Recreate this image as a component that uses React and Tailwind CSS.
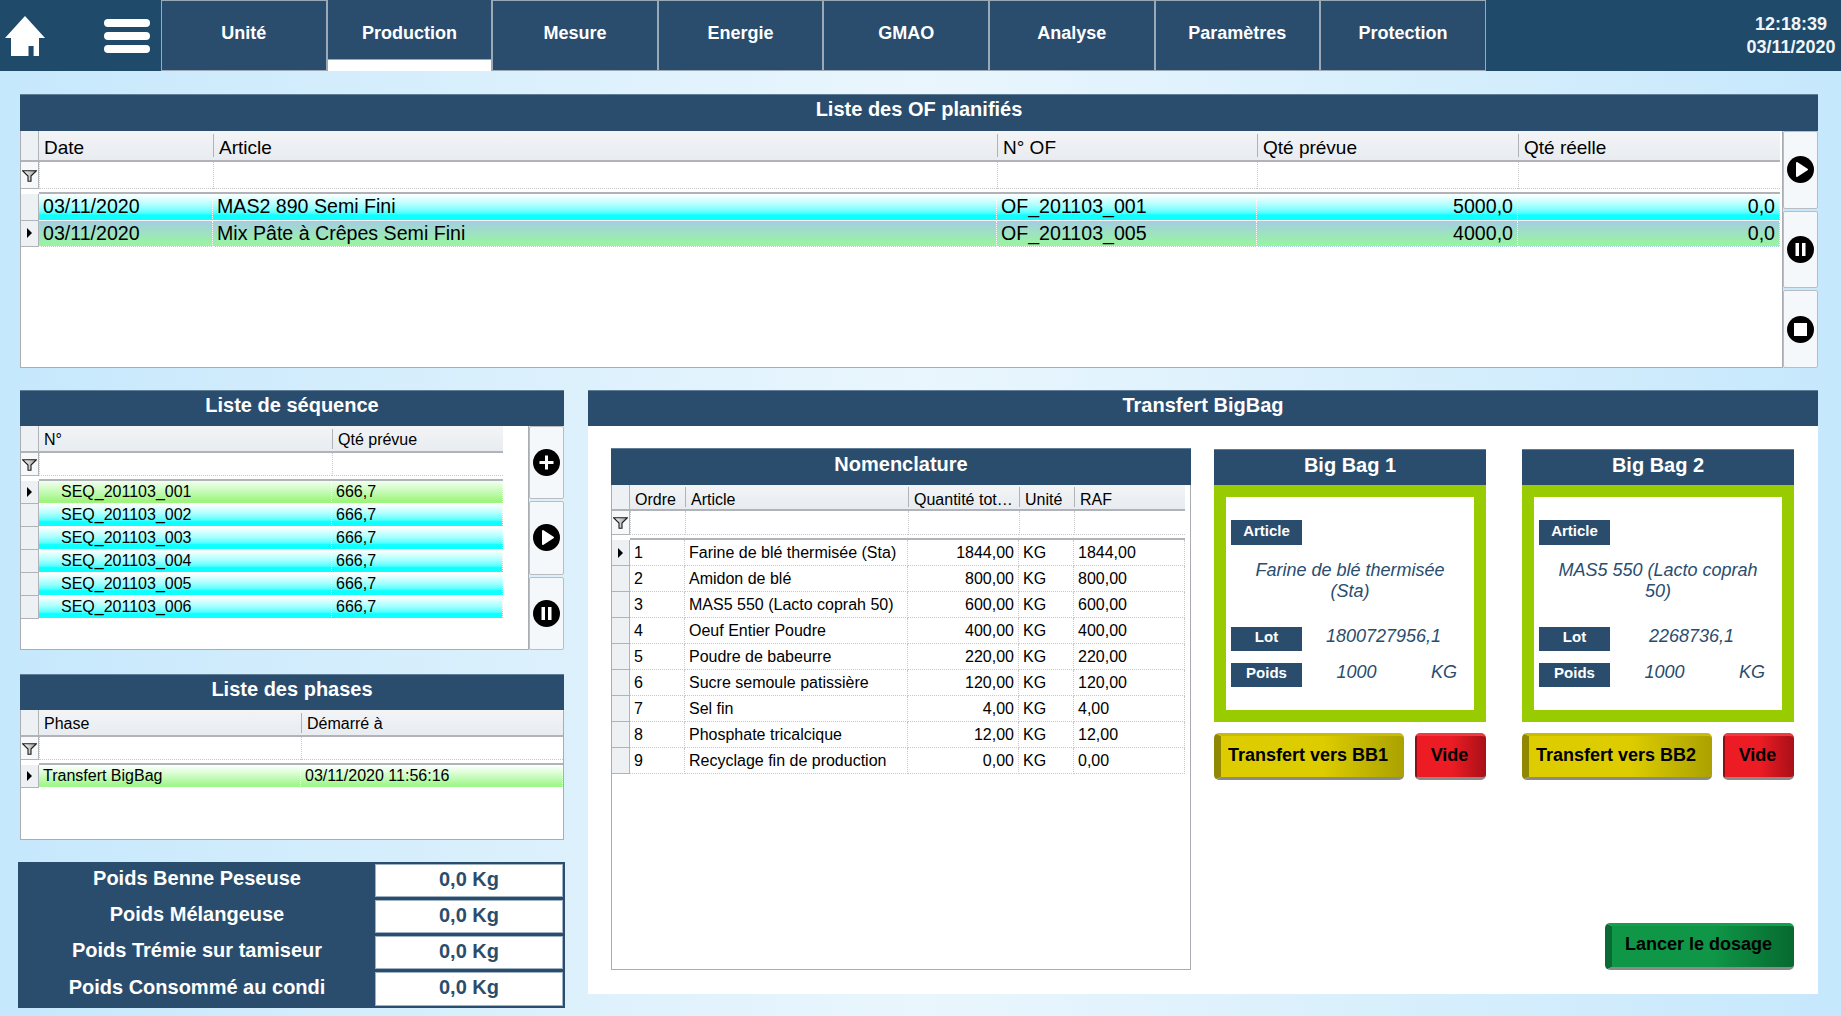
import React from "react";

const navy = "bg-[#2a4d6e]";

const tabs = ["Unité", "Production", "Mesure", "Energie", "GMAO", "Analyse", "Paramètres", "Protection"];

const CYAN = "bg-linear-to-b from-[#ffffff] to-[#0dffff] to-80%";

// tableaux
const ofColumns = [
  { label: "Date", w: "w-[174px]" },
  { label: "Article", w: "w-[784px]" },
  { label: "N° OF", w: "w-[260px]" },
  { label: "Qté prévue", w: "w-[261px]", right: true },
  { label: "Qté réelle", w: "w-[262px]", right: true },
];
const ofRows = [
  { bg: CYAN, cells: ["03/11/2020", "MAS2 890 Semi Fini", "OF_201103_001", "5000,0", "0,0"] },
  {
    bg: "bg-linear-to-b from-[#a4cde2] to-[#97f699]",
    selected: true,
    cells: ["03/11/2020", "Mix Pâte à Crêpes Semi Fini", "OF_201103_005", "4000,0", "0,0"],
  },
];

const seqColumns = [
  { label: "N°", w: "w-[293px]", pad: "pl-[22px]" },
  { label: "Qté prévue", w: "w-[171px]" },
];
const seqRows = [
  { bg: "bg-linear-to-b from-[#f2fff0] to-[#9ef57e] to-90%", selected: true, cells: ["SEQ_201103_001", "666,7"] },
  { bg: CYAN, cells: ["SEQ_201103_002", "666,7"] },
  { bg: CYAN, cells: ["SEQ_201103_003", "666,7"] },
  { bg: CYAN, cells: ["SEQ_201103_004", "666,7"] },
  { bg: CYAN, cells: ["SEQ_201103_005", "666,7"] },
  { bg: CYAN, cells: ["SEQ_201103_006", "666,7"] },
];

const phaseColumns = [
  { label: "Phase", w: "w-[262px]" },
  { label: "Démarré à", w: "w-[262px]" },
];
const phaseRows = [
  {
    bg: "bg-linear-to-b from-[#ffffff] to-[#a0f78c] to-90%",
    selected: true,
    cells: ["Transfert BigBag", "03/11/2020 11:56:16"],
  },
];

const nomColumns = [
  { label: "Ordre", w: "w-[55px]" },
  { label: "Article", w: "w-[223px]" },
  { label: "Quantité tot…", w: "w-[111px]", right: true },
  { label: "Unité", w: "w-[55px]" },
  { label: "RAF", w: "w-[111px]" },
];
const nomRows = [
  ["1", "Farine de blé thermisée (Sta)", "1844,00", "KG", "1844,00"],
  ["2", "Amidon de blé", "800,00", "KG", "800,00"],
  ["3", "MAS5 550 (Lacto coprah 50)", "600,00", "KG", "600,00"],
  ["4", "Oeuf Entier Poudre", "400,00", "KG", "400,00"],
  ["5", "Poudre de babeurre", "220,00", "KG", "220,00"],
  ["6", "Sucre semoule patissière", "120,00", "KG", "120,00"],
  ["7", "Sel fin", "4,00", "KG", "4,00"],
  ["8", "Phosphate tricalcique", "12,00", "KG", "12,00"],
  ["9", "Recyclage fin de production", "0,00", "KG", "0,00"],
].map((cells, i) => ({ bg: "bg-white", selected: i === 0, dotted: true, cells }));

const weights = [
  ["Poids Benne Peseuse", "h-[33px]"],
  ["Poids Mélangeuse", "h-[33px]"],
  ["Poids Trémie sur tamiseur", "h-[33px]"],
  ["Poids Consommé au condi", "h-[34px]"],
];

function HomeIcon() {
  return (
    <svg width="40" height="40" viewBox="0 0 40 40" className="ml-[5px] shrink-0">
      <path d="M20 0 L40 22 H34 V40 H28.6 V30 H23.5 V40 H6 V22 H0 Z" fill="#fff" />
    </svg>
  );
}

function FilterIcon() {
  return (
    <svg width="15" height="12" viewBox="0 0 15 12">
      <defs>
        <linearGradient id="funnel" x1="0" x2="1" y1="0" y2="0">
          <stop offset="0" stopColor="#ffffff" />
          <stop offset="1" stopColor="#9a9a9a" />
        </linearGradient>
      </defs>
      <path d="M0.6 0.7 H14.4 L9 6 V11.3 H6 V6 Z" fill="url(#funnel)" stroke="#1c1c1c" strokeWidth="1.1" />
    </svg>
  );
}

function RoundIcon({ type }) {
  return (
    <svg width="27" height="27" viewBox="0 0 27 27">
      <circle cx="13.5" cy="13.5" r="13.5" fill="#000" />
      {type === "play" && <path d="M10 7 L20 13.5 L10 20 Z" fill="#fff" stroke="#fff" strokeWidth="2" strokeLinejoin="round" />}
      {type === "pause" && <path d="M8.5 7 H12 V20 H8.5 Z M15 7 H18.5 V20 H15 Z" fill="#fff" />}
      {type === "stop" && <rect x="7" y="7" width="13" height="13" fill="#fff" />}
      {type === "plus" && <path d="M12 6.5 H15 V12 H20.5 V15 H15 V20.5 H12 V15 H6.5 V12 H12 Z" fill="#fff" />}
    </svg>
  );
}

function SideButtons({ icons }) {
  return (
    <div className="flex flex-col gap-[2px] shrink-0 w-[35px]">
      {icons.map((type) => (
        <div
          key={type}
          className="flex-1 flex items-center justify-center bg-[#f5f8fb] border border-[#b9bdc1] rounded-[2px]"
        >
          <RoundIcon type={type} />
        </div>
      ))}
    </div>
  );
}

function Title({ text, className = "h-[36px] pb-[7px]" }) {
  return (
    <div
      className={`${className} ${navy} border-t border-[#5f7d96] shrink-0 flex items-center justify-center text-white font-bold text-[20px]`}
    >
      {text}
    </div>
  );
}

function DataGrid({ columns, rows, text, cellText, headH, headPad, filterH, rowH, className = "" }) {
  return (
    <div className={`bg-white border-x border-b border-[#a9adb1] overflow-hidden ${className}`}>
      <div className={`flex ${headH}`}>
        <div className="w-[18px] shrink-0 bg-[#eef1f4] border-r border-b-2 border-[#b0b4b8]" />
        {columns.map((c, i) => (
          <div
            key={c.label}
            className={`${c.w} shrink-0 flex items-center bg-linear-to-b from-[#f3f4f6] to-[#e8ecf0] border-b-2 border-[#b0b4b8] ${text}`}
          >
            <div className={`h-[80%] w-full flex items-center pl-[5px] whitespace-nowrap ${headPad} ${i > 0 ? "border-l border-[#b0b4b8]" : ""}`}>
              {c.label}
            </div>
          </div>
        ))}
      </div>
      <div className={`flex ${filterH}`}>
        <div className="w-[18px] shrink-0 flex items-center pl-[1px] pt-[1px] bg-[#f7f8f9] border-r border-b border-[#b0b4b8]">
          <FilterIcon />
        </div>
        {columns.map((c) => (
          <div key={c.label} className={`${c.w} shrink-0 border-l border-b border-dotted border-[#c8c8c8]`} />
        ))}
      </div>
      <div className="flex h-[5px]">
        <div className="w-[18px] shrink-0" />
        {columns.map((c) => (
          <div key={c.label} className={`${c.w} shrink-0 border-b-2 border-[#b0b4b8]`} />
        ))}
      </div>
      {rows.map((row, r) => (
        <div key={r} className={`flex ${rowH}`}>
          <div className="w-[18px] shrink-0 flex items-center justify-center bg-[#eef1f4] border-r border-b border-[#b0b4b8]">
            {row.selected && <div className="w-0 h-0 border-y-[5px] border-y-transparent border-l-[5px] border-l-black" />}
          </div>
          {columns.map((c, i) => (
            <div
              key={c.label}
              className={`${c.w} shrink-0 flex items-center whitespace-nowrap ${row.bg} ${cellText || text} ${
                row.dotted ? "border-b border-r border-dotted border-[#c8c8c8]" : "border-b border-r border-dotted border-white"
              } ${c.right ? "justify-end pr-[4px]" : c.pad || "pl-[4px]"}`}
            >
              {row.cells[i]}
            </div>
          ))}
        </div>
      ))}
    </div>
  );
}

function Bevel({ label, className, edge, width }) {
  return (
    <div
      className={`${width} h-[47px] shrink-0 flex items-center rounded-[5px] border-b-[3px] border-b-[#8a8a8a] ${edge} ${className} text-black font-bold text-[18px] whitespace-nowrap`}
    >
      {label}
    </div>
  );
}

function BigBag({ title, article, lot, btn }) {
  return (
    <div className="w-[272px] shrink-0 flex flex-col">
      <Title text={title} className="h-[36px] pb-[5px]" />
      <div className="h-[237px] border-[12px] border-[#99cc00] bg-white flex flex-col pl-[5px] text-[18px] italic text-[#2a4d6e]">
        <div className="mt-[23px] w-[71px] h-[25px] pb-[2px] shrink-0 flex items-center justify-center bg-[#2a4d6e] text-white font-bold not-italic text-[15px]">
          Article
        </div>
        <div className="mt-[15px] pr-[21px] pl-[16px] h-[41px] text-center leading-[20.5px]">{article}</div>
        <div className="mt-[26px] h-[24px] flex items-center">
          <div className="w-[71px] h-[24px] pb-[3px] flex items-center justify-center bg-[#2a4d6e] text-white font-bold not-italic text-[15px]">
            Lot
          </div>
          <div className="w-[163px] text-center leading-none pb-[6px]">{lot}</div>
        </div>
        <div className="mt-[12px] h-[24px] flex items-center">
          <div className="w-[71px] h-[24px] pb-[3px] flex items-center justify-center bg-[#2a4d6e] text-white font-bold not-italic text-[15px]">
            Poids
          </div>
          <div className="w-[109px] text-center leading-none pb-[6px]">1000</div>
          <div className="w-[60px] ml-[3px] text-center leading-none pb-[6px]">KG</div>
        </div>
      </div>
      <div className="flex justify-between mt-[11px]">
        <Bevel
          label={btn}
          width="w-[190px]"
          edge="border-l-[7px] border-l-[#8f8800] border-t-[3px] border-t-[#c9bb0a]"
          className="pl-[7px] pb-[2px] bg-linear-to-r from-[#ddcd00] from-55% to-[#aba100]"
        />
        <Bevel
          label="Vide"
          width="w-[71px]"
          edge="border-l-[2px] border-l-[#8c0f16] border-t-[3px] border-t-[#ee3a40]"
          className="justify-center pr-[4px] pb-[2px] bg-linear-to-r from-[#ed1c24] from-50% to-[#a90f18]"
        />
      </div>
    </div>
  );
}

export default function App() {
  return (
    <div className="w-[1841px] h-[1016px] overflow-hidden flex flex-col bg-linear-to-r from-[#c6e8fc] via-[#eaf6fd] to-[#c6e8fc] font-['Liberation_Sans',Arial,sans-serif]">
      {/* barre du haut */}
      <div className="h-[71px] shrink-0 flex items-center bg-[#204a6a]">
        <div className="w-[161px] shrink-0 flex items-center">
          <HomeIcon />
          <div className="ml-[59px] w-[46px] flex flex-col gap-[5px]">
            <div className="h-[8px] rounded-[4px] bg-white" />
            <div className="h-[8px] rounded-[4px] bg-white" />
            <div className="h-[8px] rounded-[4px] bg-white" />
          </div>
        </div>
        {tabs.map((t) => (
          <div
            key={t}
            className={`w-[165.6px] h-[71px] shrink-0 flex flex-col border-x border-[#9aa9b5] ${
              t === "Production" ? "bg-white" : navy
            }`}
          >
            <div
              className={`${
                t === "Production" ? "h-[60px] pt-[8px] border-b border-[#9aa9b5]" : "h-[71px] pb-[5px] border-y border-[#9aa9b5]"
              } ${navy} flex items-center justify-center text-white font-bold text-[18px]`}
            >
              {t}
            </div>
          </div>
        ))}
        <div className="flex-1 flex flex-col items-end pr-[5px] text-[#f2f5f8] font-bold text-[18px] leading-[23px] text-center">
          <div className="w-[90px]">12:18:39</div>
          <div className="w-[90px] whitespace-nowrap">03/11/2020</div>
        </div>
      </div>

      <div className="flex-1 flex flex-col pt-[23px] pl-[20px] pr-[23px]">
        {/* liste des OF */}
        <Title text="Liste des OF planifiés" className="h-[37px] pb-[8px]" />
        <div className="flex h-[237px] shrink-0">
          <DataGrid
            columns={ofColumns}
            rows={ofRows}
            text="text-[19px] text-black"
            cellText="text-[19.6px] text-black"
            headH="h-[31px]"
            headPad="pt-[5px]"
            filterH="h-[27px]"
            rowH="h-[26.5px]"
            className="w-[1763px] shrink-0"
          />
          <SideButtons icons={["play", "pause", "stop"]} />
        </div>

        <div className="flex mt-[22px] gap-[24px]">
          <div className="w-[544px] shrink-0 flex flex-col">
            {/* séquences */}
            <Title text="Liste de séquence" />
            <div className="flex h-[224px]">
              <DataGrid
                columns={seqColumns}
                rows={seqRows}
                text="text-[16px] text-black"
                headH="h-[27px]"
                headPad="pt-[2px]"
                filterH="h-[23px]"
                rowH="h-[23px]"
                className="w-[509px] shrink-0"
              />
              <SideButtons icons={["plus", "play", "pause"]} />
            </div>

            {/* phases */}
            <div className="mt-[24px]">
              <Title text="Liste des phases" />
              <DataGrid
                columns={phaseColumns}
                rows={phaseRows}
                text="text-[16px] text-black"
                headH="h-[27px]"
                headPad="pt-[2px]"
                filterH="h-[23px]"
                rowH="h-[23px]"
                className="h-[130px]"
              />
            </div>

            {/* poids */}
            <div className={`mt-[22px] -ml-[2px] w-[547px] h-[146px] ${navy} flex flex-col gap-[3px] pt-[2px] pr-[2px]`}>
              {weights.map(([label, h]) => (
                <div key={label} className={`flex ${h}`}>
                  <div className="w-[357px] flex items-center justify-center text-white font-bold text-[20px] pb-[5px] pl-[1px]">
                    {label}
                  </div>
                  <div className="w-[188px] bg-white border border-[#9fb2c2] flex items-center justify-center text-[#2a4d6e] font-bold text-[20px] pb-[4px]">
                    0,0 Kg
                  </div>
                </div>
              ))}
            </div>
          </div>

          {/* transfert */}
          <div className="w-[1230px] h-[604px] shrink-0 bg-white flex flex-col">
            <Title text="Transfert BigBag" />
            <div className="flex-1 flex pl-[23px] pt-[22px] pb-[24px]">
              <div className="w-[580px] shrink-0 flex flex-col">
                <Title text="Nomenclature" className="h-[37px] pb-[7px]" />
                <DataGrid
                  columns={nomColumns}
                  rows={nomRows}
                  text="text-[16px] text-black"
                  headH="h-[26px]"
                  headPad="pt-[6px]"
                  filterH="h-[24px]"
                  rowH="h-[26px]"
                  className="flex-1"
                />
              </div>
              <div className="ml-[23px] mt-[1px]">
                <BigBag title="Big Bag 1" article="Farine de blé thermisée (Sta)" lot="1800727956,1" btn="Transfert vers BB1" />
              </div>
              <div className="ml-[36px] mt-[1px] flex flex-col">
                <BigBag title="Big Bag 2" article="MAS5 550 (Lacto coprah 50)" lot="2268736,1" btn="Transfert vers BB2" />
                <div className="mt-auto self-end">
                  <Bevel
                    label="Lancer le dosage"
                    width="w-[189px]"
                    edge="border-l-[7px] border-l-[#0a6a33] border-t-[3px] border-t-[#12a04d]"
                    className="pl-[13px] pb-[4px] bg-linear-to-r from-[#0f9747] from-55% to-[#076a30]"
                  />
                </div>
              </div>
            </div>
          </div>
        </div>
      </div>
    </div>
  );
}
